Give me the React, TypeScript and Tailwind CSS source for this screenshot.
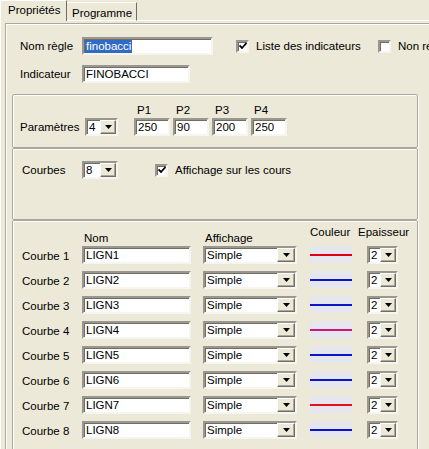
import React from 'react';

const sunken =
  'bg-white border-2 border-t-[#9a988e] border-l-[#9a988e] border-b-[#f6f5f0] border-r-[#f6f5f0] shadow-[inset_1px_1px_0_#6f6d65]';
const raised =
  'bg-[#ECE9D8] border border-t-white border-l-white border-b-[#716f64] border-r-[#716f64] shadow-[inset_-1px_-1px_0_#aca899]';
const groupBox =
  'border border-[#aca899] rounded-[2px] shadow-[inset_1px_1px_0_#fff,1px_1px_0_#fff]';

function TextField({ value, className = '', selected = false }: { value: string; className?: string; selected?: boolean }) {
  return (
    <div className={`h-[18px] shrink-0 flex items-center pl-[1px] overflow-hidden ${sunken} ${className}`}>
      {selected ? <span className="bg-[#316ac5] text-white px-[1px] leading-[13px]">{value}</span> : <span className="pl-[1px]">{value}</span>}
    </div>
  );
}

function Arrow() {
  return (
    <svg width="7" height="4" viewBox="0 0 7 4">
      <polygon points="0,0 7,0 3.5,4" fill="#000" />
    </svg>
  );
}

function Combo({ value, className = '', btn = 'w-[16px]' }: { value: string; className?: string; btn?: string }) {
  return (
    <div className={`h-[18px] shrink-0 flex items-stretch ${sunken} ${className}`}>
      <span className="flex-1 flex items-center pl-[2px] overflow-hidden">{value}</span>
      <div className={`flex items-center justify-center ${raised} ${btn}`}>
        <Arrow />
      </div>
    </div>
  );
}

function Check({ checked }: { checked: boolean }) {
  return (
    <div className={`w-[13px] h-[13px] flex items-center justify-center shrink-0 ${sunken}`}>
      {checked && (
        <svg width="8" height="8" viewBox="0 0 8 8">
          <path d="M0.5 3.5 L3 6 L7.5 1" stroke="#000" strokeWidth="1.8" fill="none" />
        </svg>
      )}
    </div>
  );
}

const curves = [
  { name: 'LIGN1', color: 'bg-[#e00010]' },
  { name: 'LIGN2', color: 'bg-[#0a14c8]' },
  { name: 'LIGN3', color: 'bg-[#0a14c8]' },
  { name: 'LIGN4', color: 'bg-[#d4147a]' },
  { name: 'LIGN5', color: 'bg-[#0a14c8]' },
  { name: 'LIGN6', color: 'bg-[#0a14c8]' },
  { name: 'LIGN7', color: 'bg-[#e81020]' },
  { name: 'LIGN8', color: 'bg-[#0a14c8]' },
];

export default function App() {
  return (
    <div className="w-[429px] h-[449px] bg-[#ECE9D8] overflow-hidden whitespace-nowrap text-black text-[11.5px] leading-[14px] font-['Liberation_Sans',Arial,sans-serif]">
      {/* Tabs */}
      <div className="flex h-[21px] items-end">
        <div className="h-[21px] w-[67px] shrink-0 border-t border-l border-white border-r border-r-[#716f64] pl-[7px] pt-[2px]">
          Propriétés
        </div>
        <div className="h-[19px] w-[70px] shrink-0 border-t border-white border-b border-r border-r-[#716f64] pl-[5px] pt-[3px]">
          Programme
        </div>
        <div className="flex-1 h-full border-b border-white" />
      </div>

      {/* Tab page */}
      <div className="h-[428px] border-l border-white pl-[4px] pt-[2px]">
        <div className="h-[440px] border-t border-l border-[#aca899] shadow-[inset_1px_1px_0_#fff]">
          {/* General */}
          <div className="h-[70px] pl-[14px] pt-[13px] flex flex-col gap-[10px]">
            <div className="flex items-center h-[18px]">
              <span className="w-[62px] shrink-0">Nom règle</span>
              <TextField value="finobacci" selected className="w-[131px]" />
              <div className="ml-[23px] flex items-center shrink-0">
                <Check checked />
                <span className="ml-[7px] w-[122px] shrink-0">Liste des indicateurs</span>
                <Check checked={false} />
                <span className="ml-[7px]">Non recalculé</span>
              </div>
            </div>
            <div className="flex items-center h-[18px]">
              <span className="w-[62px] shrink-0">Indicateur</span>
              <TextField value="FINOBACCI" className="w-[108px]" />
            </div>
          </div>

          {/* Paramètres */}
          <div className={`ml-[6px] w-[406px] h-[54px] pl-[7px] pt-[8px] ${groupBox}`}>
            <div className="flex items-end">
              <div className="flex items-center h-[18px]">
                <span className="w-[65px] shrink-0">Paramètres</span>
                <Combo value="4" className="w-[33px]" />
              </div>
              <div className="ml-[16px] flex gap-[3px]">
                {['250', '90', '200', '250'].map((v, i) => (
                  <div key={i} className="flex flex-col">
                    <span className="pl-[3px] h-[15px]">P{i + 1}</span>
                    <TextField value={v} className="w-[36px]" />
                  </div>
                ))}
              </div>
            </div>
          </div>

          {/* Courbes */}
          <div className={`ml-[6px] w-[406px] h-[72px] pl-[9px] pt-[12px] ${groupBox}`}>
            <div className="flex items-center h-[18px]">
              <span className="w-[60px] shrink-0">Courbes</span>
              <Combo value="8" className="w-[36px]" />
              <div className="ml-[37px] flex items-center">
                <Check checked />
                <span className="ml-[7px]">Affichage sur les cours</span>
              </div>
            </div>
          </div>

          {/* Liste des courbes */}
          <div className={`ml-[6px] w-[406px] h-[240px] pl-[9px] ${groupBox}`}>
            <div className="flex h-[25px]">
              <span className="w-[62px] shrink-0" />
              <span className="w-[121px] shrink-0 pt-[10px]">Nom</span>
              <span className="w-[105px] shrink-0 pt-[10px]">Affichage</span>
              <span className="w-[48px] shrink-0 pt-[4px]">Couleur</span>
              <span className="pt-[4px]">Epaisseur</span>
            </div>
            {curves.map((c, i) => (
              <div key={i} className="flex h-[25px]">
                <span className="w-[60px] shrink-0 h-[18px] flex items-center pt-[2px]">Courbe {i + 1}</span>
                <TextField value={c.name} className="w-[109px]" />
                <Combo value="Simple" className="ml-[12px] w-[94px]" btn="w-[18px]" />
                <div className="ml-[13px] w-[42px] shrink-0 h-[17px] bg-[#e6e6ee] flex items-center">
                  <div className={`w-full h-[2px] ${c.color}`} />
                </div>
                <Combo value="2" className="ml-[15px] w-[31px]" />
              </div>
            ))}
          </div>
        </div>
      </div>
    </div>
  );
}
